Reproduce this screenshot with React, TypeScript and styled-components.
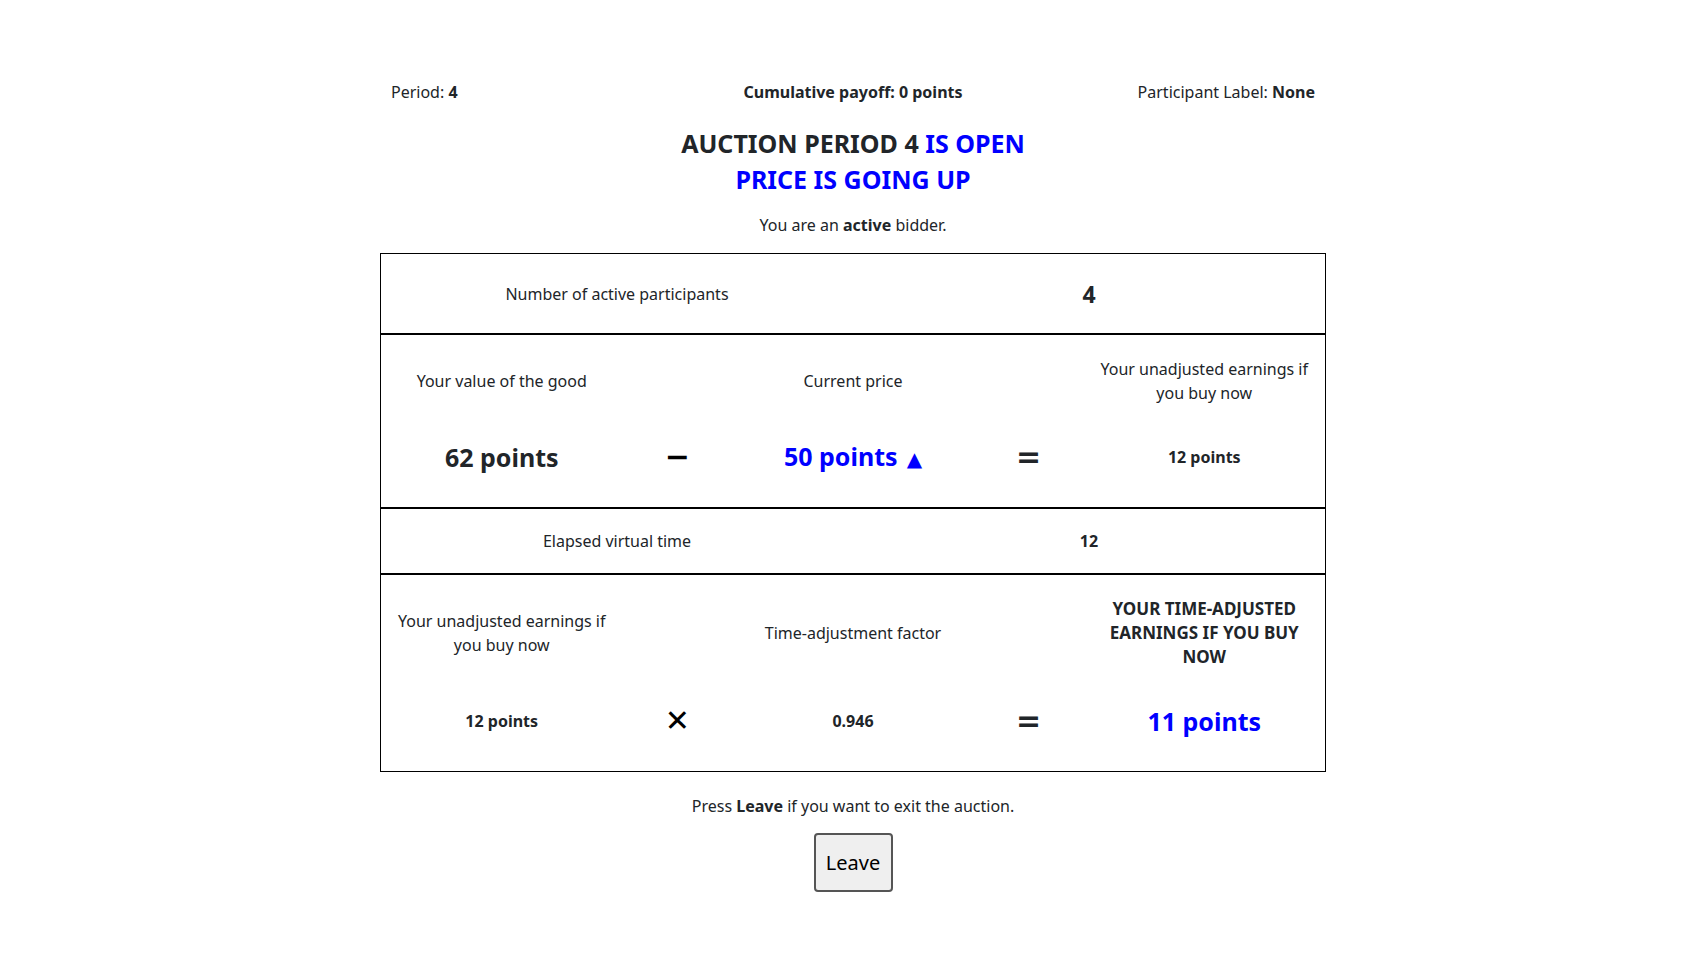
import React from "react";
import styled, { createGlobalStyle } from "styled-components";

const GlobalStyle = createGlobalStyle`
  body {
    margin: 0;
    background: #fff;
    color: #212529;
    font-family: "Noto Sans", "Open Sans", "Liberation Sans", sans-serif;
    font-size: 16px;
    line-height: 24px;
  }
`;

const Page = styled.div`
  width: 946px;
  margin: 0 auto;
  padding-top: 80px;
`;

const InfoBar = styled.div`
  display: grid;
  grid-template-columns: 1fr 1fr 1fr;
  padding: 0 11px;
`;

const InfoItem = styled.div<{ align: "left" | "center" | "right" }>`
  text-align: ${(p) => p.align};
  font-weight: ${(p) => (p.align === "center" ? 700 : 400)};
`;

const Heading = styled.h1`
  margin: 21px 0 0;
  text-align: center;
  font-size: 25px;
  line-height: 36px;
  font-weight: 700;
  color: #212529;
`;

const Blue = styled.span`
  color: #0000ff;
`;

const Status = styled.p`
  margin: 16px 0;
  text-align: center;
`;

const Table = styled.div`
  border: 1px solid #000;
`;

const Row = styled.div`
  display: grid;
  align-items: center;
  text-align: center;
  & + & {
    border-top: 2px solid #000;
  }
`;

const SimpleRow = styled(Row)<{ height: number }>`
  grid-template-columns: 1fr 1fr;
  height: ${(p) => p.height}px;
`;

const EquationRow = styled(Row)`
  grid-template-columns: 2.2fr 1fr 2.2fr 1fr 2.2fr;
  grid-template-rows: auto 40px;
  row-gap: 32px;
  padding: 22px 0 30px;
`;

const Label = styled.div<{ strong?: boolean }>`
  padding: 0 8px;
  font-weight: ${(p) => (p.strong ? 700 : 400)};
  font-size: ${(p) => (p.strong ? "17px" : "16px")};
  text-transform: ${(p) => (p.strong ? "uppercase" : "none")};
`;

const Value = styled.div<{ size?: "small" | "large"; blue?: boolean }>`
  font-weight: 700;
  font-size: ${(p) => (p.size === "large" ? "25px" : "16px")};
  line-height: 40px;
  color: ${(p) => (p.blue ? "#0000ff" : "#212529")};
`;

const Count = styled.div`
  font-weight: 700;
  font-size: 23px;
`;

const Operator = styled.div<{ dark?: boolean }>`
  font-family: "DejaVu Sans", sans-serif;
  font-weight: 700;
  font-size: 30px;
  line-height: 40px;
  color: ${(p) => (p.dark ? "#212529" : "#000")};
`;

const Arrow = styled.span`
  font-family: "DejaVu Sans", sans-serif;
  font-size: 20px;
  margin-left: 9px;
`;

const Note = styled.p`
  margin: 22px 0 15px;
  text-align: center;
`;

const ButtonRow = styled.div`
  display: flex;
  justify-content: center;
`;

const LeaveButton = styled.button`
  width: 79px;
  height: 59px;
  border: 2px solid #555;
  border-radius: 4px;
  background: #efefef;
  color: #000;
  font-family: "Noto Sans", sans-serif;
  font-size: 20px;
  cursor: pointer;
`;

export default function App() {
  return (
    <>
      <GlobalStyle />
      <Page>
        <InfoBar>
          <InfoItem align="left">
            Period: <b>4</b>
          </InfoItem>
          <InfoItem align="center">Cumulative payoff: 0 points</InfoItem>
          <InfoItem align="right">
            Participant Label: <b>None</b>
          </InfoItem>
        </InfoBar>

        <Heading>
          AUCTION PERIOD 4 <Blue>IS OPEN</Blue>
          <br />
          <Blue>PRICE IS GOING UP</Blue>
        </Heading>

        <Status>
          You are an <b>active</b> bidder.
        </Status>

        <Table>
          <SimpleRow height={79}>
            <Label>Number of active participants</Label>
            <Count>4</Count>
          </SimpleRow>

          <EquationRow>
            <Label>Your value of the good</Label>
            <div />
            <Label>Current price</Label>
            <div />
            <Label>Your unadjusted earnings if you buy now</Label>
            <Value size="large">62 points</Value>
            <Operator>−</Operator>
            <Value size="large" blue>
              50 points<Arrow>▲</Arrow>
            </Value>
            <Operator dark>=</Operator>
            <Value>12 points</Value>
          </EquationRow>

          <SimpleRow height={64}>
            <Label>Elapsed virtual time</Label>
            <Value>12</Value>
          </SimpleRow>

          <EquationRow>
            <Label>Your unadjusted earnings if you buy now</Label>
            <div />
            <Label>Time-adjustment factor</Label>
            <div />
            <Label strong>Your time-adjusted earnings if you buy now</Label>
            <Value>12 points</Value>
            <Operator>✕</Operator>
            <Value>0.946</Value>
            <Operator dark>=</Operator>
            <Value size="large" blue>
              11 points
            </Value>
          </EquationRow>
        </Table>

        <Note>
          Press <b>Leave</b> if you want to exit the auction.
        </Note>
        <ButtonRow>
          <LeaveButton>Leave</LeaveButton>
        </ButtonRow>
      </Page>
    </>
  );
}
